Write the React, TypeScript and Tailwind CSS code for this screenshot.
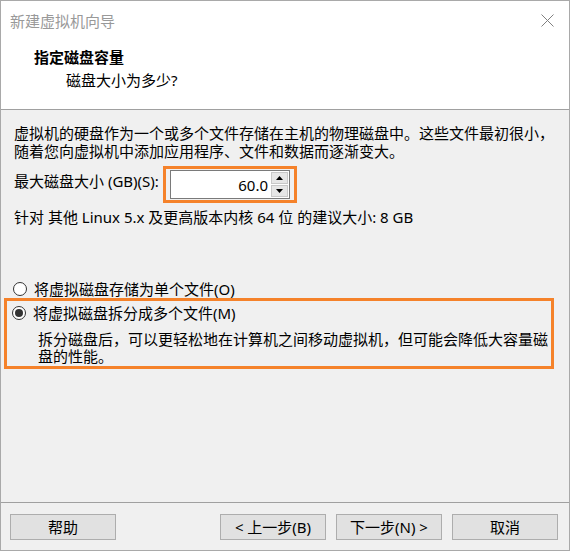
import React from "react";

const font = {
  fontFamily: '"Segoe UI", "Noto Sans", "Noto Sans CJK SC", sans-serif',
};

function Radio({ checked }: { checked?: boolean }) {
  return (
    <span className="w-[14px] h-[14px] rounded-full border border-[#333333] bg-white flex items-center justify-center shrink-0">
      {checked && <span className="w-[8px] h-[8px] rounded-full bg-[#333333]" />}
    </span>
  );
}

function Btn({ children }: { children: React.ReactNode }) {
  return (
    <div className="w-[106px] h-[26px] border border-[#adadad] bg-[#e1e1e1] flex items-center justify-center text-[15px] leading-[18px] text-black">
      {children}
    </div>
  );
}

export default function App() {
  return (
    <div
      className="w-[570px] h-[551px] border border-[#a9a9a9] bg-[#f0f0f0] flex flex-col text-black overflow-hidden"
      style={font}
    >
      {/* Title bar */}
      <div className="h-[39px] bg-white flex items-center justify-between pl-[9px] pr-[15px] shrink-0">
        <span className="text-[15px] leading-[18px] text-[#999999]">新建虚拟机向导</span>
        <svg width="13" height="13" viewBox="0 0 13 13">
          <path d="M0.5 0.5 L12.5 12.5 M12.5 0.5 L0.5 12.5" stroke="#808080" strokeWidth="1" />
        </svg>
      </div>
      {/* Header */}
      <div className="h-[70px] bg-white border-b border-[#a0a0a0] pt-[8px] shrink-0">
        <div className="pl-[33px] text-[15px] leading-[18px] font-bold">指定磁盘容量</div>
        <div className="pl-[65px] mt-[5px] text-[15px] leading-[18px]">磁盘大小为多少?</div>
      </div>
      {/* Body */}
      <div className="flex-1 flex flex-col text-[15px] leading-[18px]">
        <div className="pt-[14px] pl-[13px]">
          <div className="whitespace-nowrap">虚拟机的硬盘作为一个或多个文件存储在主机的物理磁盘中。这些文件最初很小，</div>
          <div className="whitespace-nowrap">随着您向虚拟机中添加应用程序、文件和数据而逐渐变大。</div>
        </div>
        <div className="flex items-start mt-[6px] pl-[13px]">
          <div className="w-[149px] mt-[6px] whitespace-nowrap">最大磁盘大小 (GB)(S):</div>
          <div className="border-[3px] border-[#f5822a] px-[4px] py-[1px]">
            <div className="w-[120px] h-[29px] border border-[#7a7a7a] bg-white flex">
              <div className="flex-1 text-right pr-[3px] pt-[5px] leading-[18px]">60.0</div>
              <div className="w-[18px] flex flex-col gap-[1px] py-[1px] pr-[1px]">
                <div className="flex-1 bg-[#e6e6e6] border border-[#c8c8c8] flex items-center justify-center">
                  <svg width="7" height="4" viewBox="0 0 7 4">
                    <path d="M3.5 0 L7 4 L0 4 Z" fill="#000" />
                  </svg>
                </div>
                <div className="flex-1 bg-[#e6e6e6] border border-[#c8c8c8] flex items-center justify-center">
                  <svg width="7" height="4" viewBox="0 0 7 4">
                    <path d="M0 0 L7 0 L3.5 4 Z" fill="#000" />
                  </svg>
                </div>
              </div>
            </div>
          </div>
        </div>
        <div className="mt-[5px] pl-[13px] whitespace-nowrap">
          针对 其他 Linux 5.x 及更高版本内核 64 位 的建议大小: 8 GB
        </div>
        <div className="mt-[54px] pl-[12px] flex items-center gap-[7px]">
          <Radio />
          <span>将虚拟磁盘存储为单个文件(O)</span>
        </div>
        <div className="ml-[3px] mr-[15px] mt-[0px] border-[3px] border-[#f5822a] pt-[3px] pb-[1px]">
          <div className="pl-[5px] flex items-center gap-[7px]">
            <Radio checked />
            <span>将虚拟磁盘拆分成多个文件(M)</span>
          </div>
          <div className="pl-[31px] mt-[9px] leading-[17px]">
            <div className="whitespace-nowrap">拆分磁盘后，可以更轻松地在计算机之间移动虚拟机，但可能会降低大容量磁</div>
            <div>盘的性能。</div>
          </div>
        </div>
      </div>
      {/* Footer */}
      <div className="h-[48px] border-t border-[#a0a0a0] pt-[11px] pl-[9px] pr-[11px] flex items-start shrink-0">
        <Btn>帮助</Btn>
        <div className="flex-1" />
        <div className="flex gap-[10px]">
          <Btn>&lt; 上一步(B)</Btn>
          <Btn>下一步(N) &gt;</Btn>
          <div className="w-0" />
        </div>
        <Btn>取消</Btn>
      </div>
    </div>
  );
}
